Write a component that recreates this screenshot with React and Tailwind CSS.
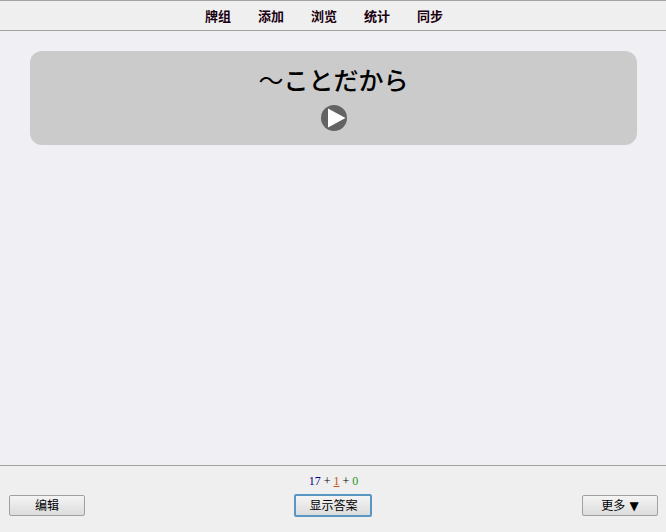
import { useState } from "react";

const MENU = ["牌组", "添加", "浏览", "统计", "同步"];

function BarButton({ children, primary, ...props }) {
  return (
    <button
      {...props}
      className={`flex items-center justify-center gap-1 rounded-xs bg-linear-to-b from-[#f4f4f4] to-[#dcdcdc] text-[12px] leading-4 text-black ${
        primary
          ? "h-[23px] w-[78px] border-2 border-[#5a96c4]"
          : "h-[21px] w-[76px] border border-[#a0a0a0]"
      }`}
    >
      {children}
    </button>
  );
}

function PlayIcon() {
  return (
    <svg viewBox="0 0 26 26" className="size-[26px]" aria-hidden="true">
      <circle cx="13" cy="13" r="13" fill="#636363" />
      <path d="M7 3.5 L24.5 13 L7 22.5 Z" fill="#fff" />
    </svg>
  );
}

export default function App() {
  const [active, setActive] = useState(MENU[0]);

  return (
    <div className="flex min-h-screen flex-col bg-[#efeff4] font-['Liberation_Sans','Noto_Sans_CJK_SC',sans-serif] text-black">
      <header className="border-y border-[#a3a3a3] bg-[#efefef]">
        <nav className="flex h-[29px] items-center justify-center gap-[27px] pt-0.5 pr-[18px]">
          {MENU.map((item) => (
            <a
              key={item}
              href="#"
              aria-current={item === active ? "page" : undefined}
              onClick={() => setActive(item)}
              className="text-[13px] leading-4 font-bold text-[#1a0010]"
            >
              {item}
            </a>
          ))}
        </nav>
      </header>

      <main className="flex-1 pt-5 pr-[29px] pl-[30px]">
        <section className="flex flex-col items-center gap-2 rounded-xl bg-[#cbcbcb] pt-[10px] pb-[14px]">
          <h1
            lang="ja"
            className="text-[25px] leading-9 font-medium font-['Noto_Sans_CJK_JP',sans-serif]"
          >
            <span className="font-normal">～</span>ことだから
          </h1>
          <button aria-label="播放">
            <PlayIcon />
          </button>
        </section>
      </main>

      <footer className="border-t border-[#a3a3a3] bg-[#efefef] pt-[7px] pr-2 pb-[15px] pl-[9px]">
        <p className="text-center text-[12px] leading-4 font-['Liberation_Serif',serif]">
          <span className="text-[#00007f]">17</span> +{" "}
          <u className="text-[#c35617]">1</u> +{" "}
          <span className="text-[#1d9a1d]">0</span>
        </p>
        <div className="mt-[5px] grid grid-cols-3 items-center">
          <div className="flex justify-start">
            <BarButton>编辑</BarButton>
          </div>
          <div className="flex justify-center">
            <BarButton primary>显示答案</BarButton>
          </div>
          <div className="flex justify-end">
            <BarButton>
              更多 <span className="font-['DejaVu_Sans',sans-serif]">▼</span>
            </BarButton>
          </div>
        </div>
      </footer>
    </div>
  );
}
